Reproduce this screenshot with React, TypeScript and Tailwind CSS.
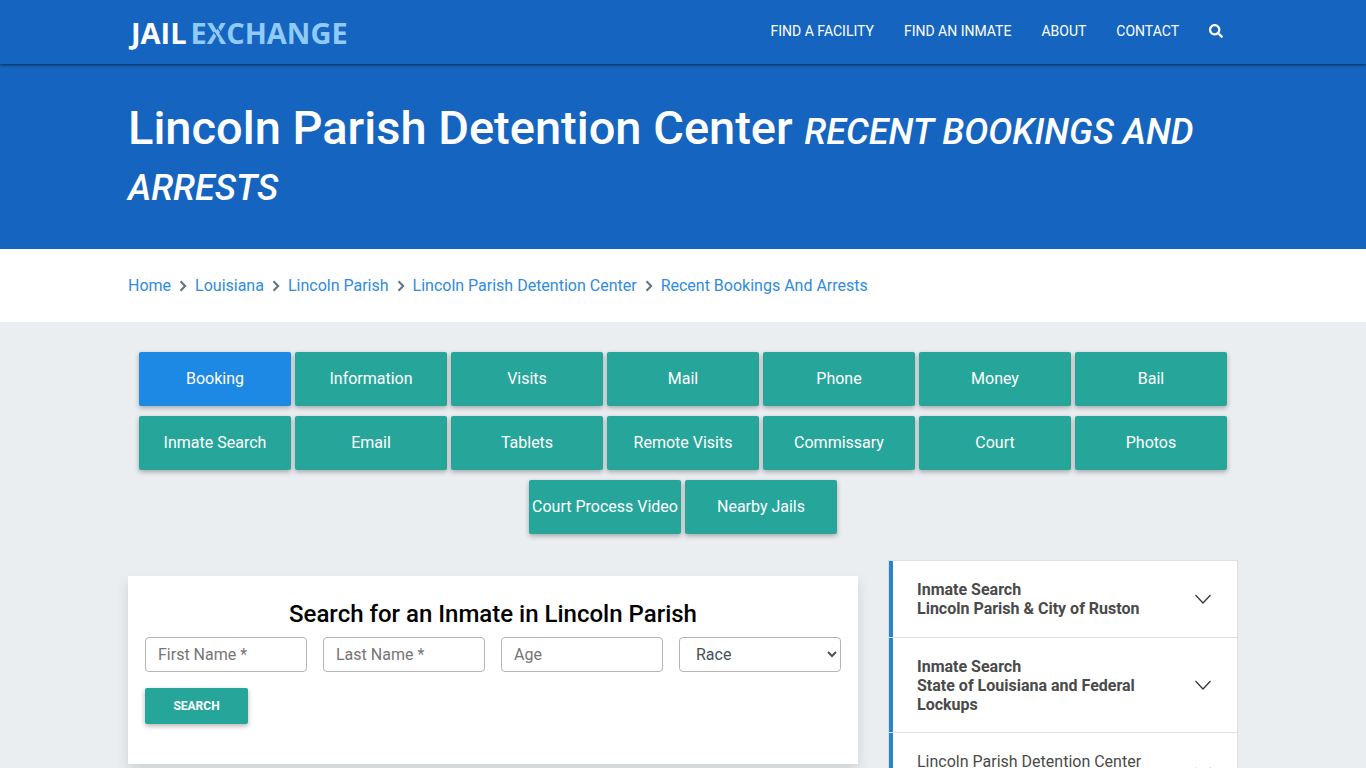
import { FaSearch } from "react-icons/fa";

const navLinks = ["Find a Facility", "Find an Inmate", "About", "Contact"];

const breadcrumbs = [
  "Home",
  "Louisiana",
  "Lincoln Parish",
  "Lincoln Parish Detention Center",
  "Recent Bookings And Arrests",
];

const tabs = [
  "Booking",
  "Information",
  "Visits",
  "Mail",
  "Phone",
  "Money",
  "Bail",
  "Inmate Search",
  "Email",
  "Tablets",
  "Remote Visits",
  "Commissary",
  "Court",
  "Photos",
  "Court Process Video",
  "Nearby Jails",
];

const fields = [
  { id: "first-name", label: "First Name *" },
  { id: "last-name", label: "Last Name *" },
  { id: "age", label: "Age" },
];

const menuItems = [
  { lines: ["Inmate Search", "Lincoln Parish & City of Ruston"], bold: true },
  {
    lines: ["Inmate Search", "State of Louisiana and Federal Lockups"],
    bold: true,
  },
  { lines: ["Lincoln Parish Detention Center"], bold: false },
];

const Logo = () => (
  <a
    href="#"
    aria-label="Jail Exchange"
    className="flex items-center gap-1 pt-0.5 pl-[3px] font-['Open_Sans',sans-serif] text-[29px] leading-10 font-bold text-white"
  >
    <span>JAIL</span>
    <span className="relative text-[#90caf9]">
      EXCHANGE
      {/* cuts on both sides of the X's long stroke */}
      <svg
        viewBox="0 0 20 22"
        className="absolute top-[9px] left-[17px] h-[22px] w-5 fill-none stroke-[#1565c0]"
        strokeWidth="1.3"
        aria-hidden="true"
      >
        <path d="M8.5 4 13.5 11.5M6 10 11 17.5" />
      </svg>
    </span>
  </a>
);

const Header = () => (
  <header className="relative z-10 bg-[#1565c0] shadow-[0_1px_3px_rgba(0,0,0,0.6)]">
    <div className="mx-auto flex h-16 max-w-[1140px] items-center justify-between px-[15px]">
      <Logo />
      <nav className="flex items-center gap-[30px] pr-[15px] pb-0.5 text-sm text-white uppercase">
        {navLinks.map((link) => (
          <a key={link} href="#">
            {link}
          </a>
        ))}
        <button type="button" aria-label="Search">
          <FaSearch className="size-3.5" />
        </button>
      </nav>
    </div>
  </header>
);

const Hero = () => (
  <section className="bg-[#1565c0]">
    <div className="mx-auto max-w-[1140px] px-[15px] pt-9 pb-[37px]">
      <h1 className="text-[47px] leading-14 font-medium text-white">
        Lincoln Parish Detention Center{" "}
        <em className="text-4xl leading-none uppercase">
          Recent Bookings and Arrests
        </em>
      </h1>
    </div>
  </section>
);

const Breadcrumbs = () => (
  <nav aria-label="Breadcrumb" className="bg-white">
    <ol className="mx-auto flex max-w-[1140px] flex-wrap items-center px-[15px] py-6 text-base leading-[25px] text-[#2f8be0]">
      {breadcrumbs.map((crumb, index) => (
        <li key={crumb} className="flex items-center">
          {index > 0 && (
            <svg
              viewBox="0 0 8 12"
              className="mx-2 h-3 w-2 fill-none stroke-[#5f7480]"
              strokeWidth="2"
              aria-hidden="true"
            >
              <path d="M1.5 1.2 6.2 6 1.5 10.8" />
            </svg>
          )}
          <a href="#">{crumb}</a>
        </li>
      ))}
    </ol>
  </nav>
);

const FacilityTabs = () => (
  <nav className="flex flex-wrap justify-center gap-x-1 gap-y-2.5">
    {tabs.map((tab, index) => (
      <a
        key={tab}
        href="#"
        className={`flex h-[54px] w-[152px] items-center justify-center rounded-xs text-base whitespace-nowrap text-white shadow-[0_2px_5px_rgba(0,0,0,0.3)] ${
          index === 0 ? "bg-[#1e88e5]" : "bg-[#26a69a]"
        }`}
      >
        {tab}
      </a>
    ))}
  </nav>
);

const SearchCard = () => (
  <form
    onSubmit={(e) => e.preventDefault()}
    className="mt-4 bg-white px-[17px] pt-5 pb-10 shadow-[0_6px_12px_rgba(0,0,0,0.12)]"
  >
    <h2 className="text-center text-2xl leading-9 font-medium text-black">
      Search for an Inmate in Lincoln Parish
    </h2>
    <div className="mt-[5px] grid grid-cols-4 gap-4">
      {fields.map(({ id, label }) => (
        <input
          key={id}
          id={id}
          type="text"
          aria-label={label}
          placeholder={label}
          className="h-[35px] w-full rounded-sm border border-[#b5b5b5] px-3 text-base text-[#495057] placeholder:text-[#757575]"
        />
      ))}
      <select
        aria-label="Race"
        className="h-[35px] w-full rounded-sm border border-[#b5b5b5] bg-white px-3 text-base text-[#495057]"
      >
        <option>Race</option>
      </select>
    </div>
    <button
      type="submit"
      className="mt-4 h-9 w-[103px] rounded-xs bg-[#26a69a] text-xs font-bold text-white uppercase shadow-[0_2px_5px_rgba(0,0,0,0.3)]"
    >
      Search
    </button>
  </form>
);

const SideMenu = () => (
  <aside className="divide-y divide-[#dfdfdf] border border-[#dfdfdf] bg-white">
    {menuItems.map(({ lines, bold }) => (
      <button
        key={lines.join()}
        type="button"
        className={`flex min-h-[77px] w-full items-center justify-between pr-[26px] text-left text-base leading-[19px] text-[#4a4a4a] ${
          bold ? "font-bold" : ""
        }`}
      >
        <span className="w-1 self-stretch bg-[#2883d5]" />
        <span className="flex-1 self-start pt-[19px] pr-10 pb-[18px] pl-6">
          {lines.map((line) => (
            <span key={line} className="block">
              {line}
            </span>
          ))}
        </span>
        <svg
          viewBox="0 0 16 10"
          className="h-2.5 w-4 fill-none stroke-[#333]"
          strokeWidth="1.2"
          aria-hidden="true"
        >
          <path d="M0.5 1l7.5 8 7.5-8" />
        </svg>
      </button>
    ))}
  </aside>
);

export default function App() {
  return (
    <div className="min-h-screen bg-[#eaeef1] font-[Roboto,sans-serif]">
      <Header />
      <Hero />
      <Breadcrumbs />
      <main className="mx-auto max-w-[1140px] px-[15px] pt-[30px]">
        <FacilityTabs />
        <div className="mt-[26px] grid grid-cols-[minmax(0,73fr)_minmax(0,35fr)] items-start gap-[30px]">
          <SearchCard />
          <SideMenu />
        </div>
      </main>
    </div>
  );
}
